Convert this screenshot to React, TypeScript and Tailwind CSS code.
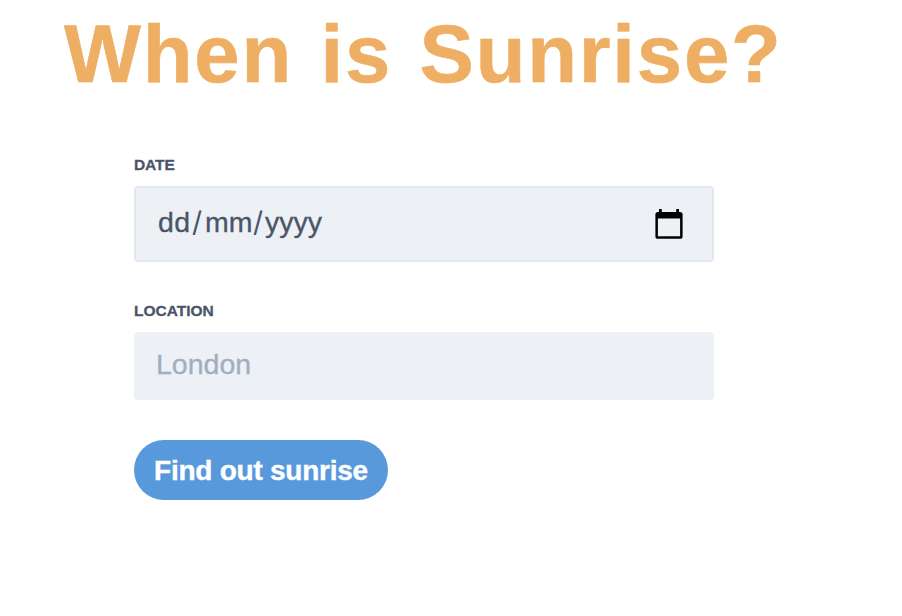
export default function App() {
  return (
    <main className="h-[616px] w-[902px] overflow-hidden bg-white font-['Liberation_Sans',sans-serif]">
      <h1 className="ml-[64px] flex h-[108px] items-center whitespace-nowrap text-[81.5px] leading-none font-bold tracking-[1.8px] text-[#eeae63] [word-spacing:3px] [-webkit-text-stroke:0.6px_#eeae63]">
        When is Sunrise?
      </h1>
      <form className="ml-[134px] w-[580px] pt-[46px]">
        <div className="h-[32px] text-[15.5px] leading-[22px] font-bold tracking-[-0.1px] text-[#4a5568] [-webkit-text-stroke:0.3px_#4a5568]">DATE</div>
        <div className="flex h-[76px] items-center justify-between rounded-[4px] border-2 border-[#e2e8f0] bg-[#edf0f5] pr-[29px] pl-[22px]">
          <div className="flex pb-[5px] text-[28.5px] leading-[32px] text-[#4a5568] [-webkit-text-stroke:0.3px_#4a5568]">
            <span className="w-[34px] tracking-[0.5px]">dd</span>
            <span className="w-[13px] font-['Inter',sans-serif] text-[28px] [-webkit-text-stroke:0px]">/</span>
            <span className="w-[48px]">mm</span>
            <span className="w-[12px] font-['Inter',sans-serif] text-[28px] [-webkit-text-stroke:0px]">/</span>
            <span>yyyy</span>
          </div>
          <svg width="28" height="30" viewBox="0 0 28 30" fill="none">
            <path d="M4 0h2.800v3h14.400V0H24v3h1a2.600 2.600 0 0 1 2.600 2.600v21.600a2.600 2.600 0 0 1-2.600 2.600H3a2.600 2.600 0 0 1-2.600-2.600V5.600A2.600 2.600 0 0 1 3 3h1zM2.900 9.500v17.800h22.200V9.500z" fill="#000" fillRule="evenodd" />
          </svg>
        </div>
        <div className="mt-[38px] h-[32px] text-[15.5px] leading-[22px] font-bold text-[#4a5568] [-webkit-text-stroke:0.3px_#4a5568]">LOCATION</div>
        <div className="flex h-[68px] items-center rounded-[4px] bg-[#edf0f5] pb-[3px] pl-[22px] text-[28.5px] text-[#a0aec0] [-webkit-text-stroke:0.3px_#a0aec0]">London</div>
        <button type="button" className="mt-[40px] flex h-[60px] w-[254px] items-center justify-center rounded-full bg-[#5899dc] pt-[1px] text-[28px] font-bold tracking-[-0.25px] whitespace-nowrap text-white [-webkit-text-stroke:0.4px_white]">
          Find out sunrise
        </button>
      </form>
    </main>
  );
}
